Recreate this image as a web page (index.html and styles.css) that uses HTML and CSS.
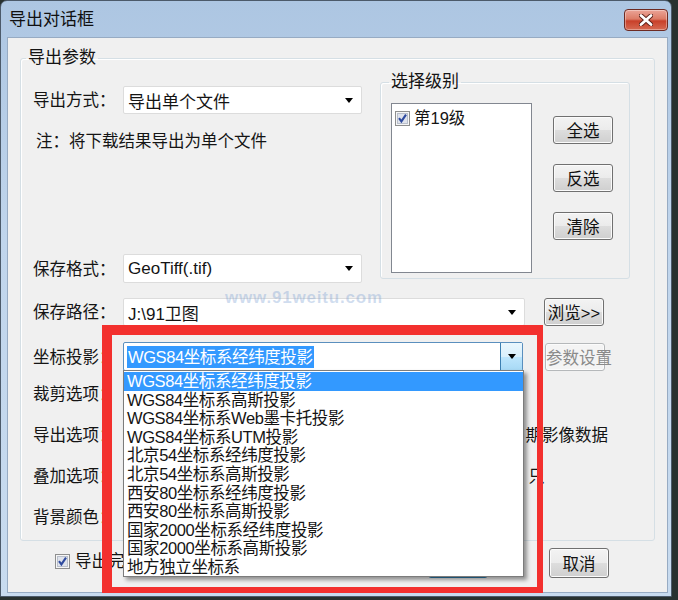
FILE: index.html
```html
<!DOCTYPE html>
<html lang="zh-CN">
<head>
  <meta charset="UTF-8">
  <title>导出对话框</title>
  <link rel="stylesheet" href="styles.css">
</head>
<body>
  <div class="window">
    <div class="titlebar">
      <span class="title">导出对话框</span>
      <button type="button" class="close">
        <svg width="14" height="12" viewBox="0 0 14 12">
          <path d="M2 1.5 L12 10.5 M12 1.5 L2 10.5" stroke="#5a1f18" stroke-width="4.6" stroke-linecap="round"/>
          <path d="M2 1.5 L12 10.5 M12 1.5 L2 10.5" stroke="#fff" stroke-width="2.8" stroke-linecap="round"/>
        </svg>
      </button>
    </div>

    <div class="client">
      <fieldset class="group main-group">
        <legend>导出参数</legend>

        <div class="top">
          <div class="top-left">
            <div class="row row-mode">
              <span class="label">导出方式：</span>
              <div class="combo combo-short">
                <span class="combo-text">导出单个文件</span>
                <span class="arrow"></span>
              </div>
            </div>
            <p class="note">注：将下载结果导出为单个文件</p>
            <div class="row row-format">
              <span class="label">保存格式：</span>
              <div class="combo combo-short">
                <span class="combo-text">GeoTiff(.tif)</span>
                <span class="arrow"></span>
              </div>
            </div>
          </div>

          <fieldset class="group levels">
            <legend>选择级别</legend>
            <div class="levels-body">
              <div class="listbox">
                <div class="check-item">
                  <svg class="checkbox" width="15" height="15" viewBox="0 0 15 15">
                    <rect x="0.5" y="0.5" width="14" height="14" fill="#f6f6f6" stroke="#8e8f8f"/>
                    <rect x="2.5" y="2.5" width="10" height="10" fill="#dfe3ec" stroke="#b9bfcb"/>
                    <path d="M4 7.2 L6.4 10.4 L11 3.6" fill="none" stroke="#2f4b9f" stroke-width="2.1"/>
                  </svg>
                  <span>第19级</span>
                </div>
              </div>
              <div class="level-buttons">
                <button type="button" class="btn">全选</button>
                <button type="button" class="btn">反选</button>
                <button type="button" class="btn">清除</button>
              </div>
            </div>
          </fieldset>
        </div>

        <div class="row row-path">
          <span class="label">保存路径：</span>
          <div class="combo combo-path">
            <span class="combo-text">J:\91卫图</span>
            <span class="arrow"></span>
          </div>
          <button type="button" class="btn btn-browse">浏览&gt;&gt;</button>
        </div>

        <div class="row row-proj">
          <span class="label">坐标投影：</span>
          <div class="combo combo-focus">
            <span class="combo-text"><span class="selected">WGS84坐标系经纬度投影</span></span>
            <span class="arrow-btn"><span class="arrow"></span></span>
          </div>
          <button type="button" class="btn btn-param" disabled>参数设置</button>
        </div>

        <div class="row opt-row first">
          <span class="label">裁剪选项：</span>
        </div>
        <div class="row opt-row">
          <span class="label">导出选项：</span>
          <span class="tail tail-history">期影像数据</span>
        </div>
        <div class="row opt-row">
          <span class="label">叠加选项：</span>
          <span class="tail tail-only">只</span>
        </div>
        <div class="row opt-row">
          <span class="label">背景颜色：</span>
        </div>
      </fieldset>

      <div class="footer">
        <div class="check-item">
          <svg class="checkbox" width="15" height="15" viewBox="0 0 15 15">
            <rect x="0.5" y="0.5" width="14" height="14" fill="#f6f6f6" stroke="#8e8f8f"/>
            <rect x="2.5" y="2.5" width="10" height="10" fill="#dfe3ec" stroke="#b9bfcb"/>
            <path d="M4 7.2 L6.4 10.4 L11 3.6" fill="none" stroke="#2f4b9f" stroke-width="2.1"/>
          </svg>
          <span>导出完</span>
        </div>
        <button type="button" class="btn btn-default">确定</button>
        <button type="button" class="btn btn-cancel">取消</button>
      </div>
    </div>

    <div class="watermark">www.91weitu.com</div>

    <ul class="droplist">
      <li class="active">WGS84坐标系经纬度投影</li>
      <li>WGS84坐标系高斯投影</li>
      <li>WGS84坐标系Web墨卡托投影</li>
      <li>WGS84坐标系UTM投影</li>
      <li>北京54坐标系经纬度投影</li>
      <li>北京54坐标系高斯投影</li>
      <li>西安80坐标系经纬度投影</li>
      <li>西安80坐标系高斯投影</li>
      <li>国家2000坐标系经纬度投影</li>
      <li>国家2000坐标系高斯投影</li>
      <li>地方独立坐标系</li>
    </ul>

    <div class="mark-box"></div>
  </div>
</body>
</html>
```

FILE: styles.css
```css
body {
  margin: 0;
  width: 678px;
  height: 600px;
  overflow: hidden;
  background: #28312f;
  font-family: "Liberation Sans", "Noto Sans CJK SC", sans-serif;
  font-size: 16.5px;
  color: #141414;
}

.window {
  position: relative;
  box-sizing: border-box;
  width: 672px;
  height: 597px;
  border: 1px solid #4c5a6a;
  border-radius: 7px 7px 0 0;
  background: linear-gradient(180deg, #adc6e2 0%, #c0d5ec 40%, #c8dbef 100%);
  display: flex;
  flex-direction: column;
}

.titlebar {
  height: 36px;
  flex: none;
  display: flex;
  align-items: flex-start;
  justify-content: space-between;
  padding: 0 3px 0 8px;
}

.title {
  font-size: 17px;
  line-height: 38px;
  color: #101010;
}

.close {
  margin-top: 8px;
  width: 44px;
  height: 22px;
  padding: 0;
  border: 1px solid #6d2a22;
  border-radius: 4px;
  background: linear-gradient(180deg, #eba497 0%, #dc7b66 45%, #c8402a 55%, #d66a52 100%);
  box-shadow: inset 0 0 0 1px rgba(255, 255, 255, 0.35);
  display: flex;
  align-items: center;
  justify-content: center;
}

.client {
  flex: 1;
  margin: 0 3px 3px 6px;
  border: 1px solid #97abc3;
  background: #f0f0f0;
}

/* group boxes */
.group {
  min-width: 0;
  margin: 0;
  border: 1px solid #d5dfe5;
  border-radius: 3px;
  box-shadow: inset 1px 1px 0 #fff;
}

.group legend {
  line-height: 20px;
  padding: 0 2px;
}

.main-group {
  margin: 10px 0 0 12px;
  width: 635px;
  box-sizing: border-box;
  padding: 0 12px 9px 12px;
}

.main-group > legend {
  margin-left: -7px;
  font-size: 17px;
}

.top {
  display: flex;
  align-items: flex-start;
}

.top-left {
  width: 329px;
}

.row {
  display: flex;
  align-items: center;
  height: 28px;
}

.label {
  width: 90px;
  flex: none;
  white-space: nowrap;
  padding-bottom: 2px;
}

.row-mode {
  margin-top: 18px;
}

.note {
  margin: 17px 0 0 3px;
  line-height: 20px;
}

.row-format {
  margin-top: 103px;
  height: 29px;
}

.levels {
  margin: 4px 0 0 18px;
  width: 250px;
  box-sizing: border-box;
  padding: 0 0 5px 10px;
}

.levels > legend {
  margin-left: -2px;
  font-size: 17px;
}

.levels-body {
  display: flex;
  align-items: flex-start;
}

.listbox {
  margin-top: 11px;
  width: 141px;
  height: 170px;
  box-sizing: border-box;
  border: 1px solid #828790;
  background: #fff;
  padding: 5px 3px;
}

.check-item {
  display: flex;
  align-items: center;
  gap: 4px;
  white-space: nowrap;
  line-height: 18px;
}

.checkbox {
  flex: none;
}

.level-buttons {
  margin: 24px 0 0 21px;
  display: flex;
  flex-direction: column;
  gap: 20px;
}

/* combo boxes */
.combo {
  box-sizing: border-box;
  height: 100%;
  display: flex;
  align-items: center;
  background: #fff;
  border: 1px solid #dcdcdc;
  border-radius: 2px;
  padding: 0 8px 0 4px;
  font-size: 17px;
}

.combo-text {
  flex: 1;
  white-space: nowrap;
}

.arrow {
  width: 0;
  height: 0;
  border-left: 4.5px solid transparent;
  border-right: 4.5px solid transparent;
  border-top: 5px solid #000;
}

.combo-short {
  width: 239px;
}

.row-path {
  margin-top: 15px;
}

.combo-path {
  width: 402px;
  padding-right: 8px;
}

.btn-browse {
  margin-left: 19px;
  width: 81px;
}

.row-proj {
  margin-top: 16px;
  height: 29px;
}

.combo-focus {
  width: 400px;
  padding: 0 0 0 3px;
  border-color: #5a8fbe;
  font-size: 16.5px;
  letter-spacing: -0.4px;
}

.selected {
  background: #3399ff;
  color: #fff;
  padding: 0 1px;
  line-height: 22px;
  display: inline-block;
}

.arrow-btn {
  width: 22px;
  height: 100%;
  box-sizing: border-box;
  border-left: 1px solid #3c7fb1;
  background: linear-gradient(180deg, #eaf6fd 0%, #d9f0fc 50%, #bee6fd 51%, #a7d9f5 100%);
  display: flex;
  align-items: center;
  justify-content: center;
}

.btn-param {
  flex: none;
  margin-left: 22px;
  width: 80px;
  height: 28px;
  white-space: nowrap;
  font-size: 16px;
}

.opt-row {
  margin-top: 13px;
}

.opt-row.first {
  margin-top: 9px;
}

.tail {
  margin-left: auto;
  white-space: nowrap;
  padding-bottom: 2px;
}

.tail-history {
  margin-right: 34px;
}

.tail-only {
  margin-right: 97px;
}

/* buttons */
.btn {
  box-sizing: border-box;
  height: 28px;
  width: 60px;
  padding: 0;
  font-family: inherit;
  font-size: 16.5px;
  color: #111;
  border: 1px solid #707070;
  border-radius: 3px;
  background: linear-gradient(180deg, #f3f3f3 0%, #ebebeb 50%, #dddddd 51%, #cfcfcf 100%);
  box-shadow: inset 0 0 0 1px #fbfbfb;
}

.btn:disabled {
  color: #8a8a8a;
  border-color: #b5b8ba;
  background: #f4f4f4;
}

.footer {
  margin-top: 7px;
  height: 30px;
  display: flex;
  align-items: center;
  padding: 0 58px 0 47px;
}

.footer .check-item {
  gap: 5px;
  margin-top: -4px;
}

.btn-default {
  margin-left: auto;
  height: 30px;
  border-color: #2f7fb0;
  background: linear-gradient(180deg, #e9f5fc 0%, #d6eefb 50%, #bfe4f8 51%, #a8d7f2 100%);
}

.btn-cancel {
  margin-left: 61px;
  height: 30px;
}

/* overlays */
.watermark {
  position: absolute;
  left: 224px;
  top: 287px;
  font-family: "Liberation Sans", sans-serif;
  font-weight: bold;
  font-size: 17px;
  letter-spacing: 0.8px;
  color: rgba(120, 158, 210, 0.35);
}

.droplist {
  position: absolute;
  left: 122px;
  top: 369px;
  width: 401px;
  height: 207px;
  box-sizing: border-box;
  margin: 0;
  padding: 1px 0 0;
  list-style: none;
  background: #fff;
  border: 1px solid #7c7c7c;
  box-shadow: 3px 3px 4px rgba(0, 0, 0, 0.4);
  font-size: 16.5px;
  letter-spacing: -0.4px;
}

.droplist li {
  height: 18.6px;
  line-height: 18.6px;
  padding-left: 3px;
  white-space: nowrap;
}

.droplist li.active {
  background: #3399ff;
  color: #fff;
}

.mark-box {
  position: absolute;
  left: 101px;
  top: 324px;
  width: 441px;
  height: 268px;
  box-sizing: border-box;
  border-style: solid;
  border-color: #f3302e;
  border-width: 10px 6px 6px 10px;
}
```
